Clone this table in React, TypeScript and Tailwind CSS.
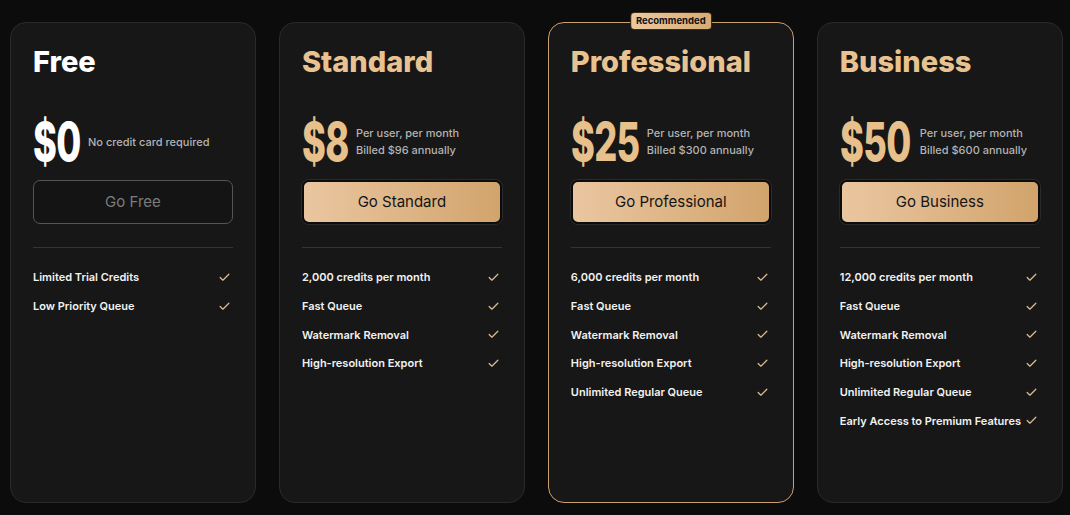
import { Check } from "lucide-react"

type Plan = {
  name: string
  price: string
  priceW: string
  note: string[]
  cta: string
  features: string[]
  free?: boolean
  recommended?: boolean
}

const plans: Plan[] = [
  {
    name: "Free",
    price: "$0",
    priceW: "w-[46px]",
    note: ["No credit card required"],
    cta: "Go Free",
    features: ["Limited Trial Credits", "Low Priority Queue"],
    free: true,
  },
  {
    name: "Standard",
    price: "$8",
    priceW: "w-[45px]",
    note: ["Per user, per month", "Billed $96 annually"],
    cta: "Go Standard",
    features: ["2,000 credits per month", "Fast Queue", "Watermark Removal", "High-resolution Export"],
  },
  {
    name: "Professional",
    price: "$25",
    priceW: "w-[67px]",
    note: ["Per user, per month", "Billed $300 annually"],
    cta: "Go Professional",
    features: [
      "6,000 credits per month",
      "Fast Queue",
      "Watermark Removal",
      "High-resolution Export",
      "Unlimited Regular Queue",
    ],
    recommended: true,
  },
  {
    name: "Business",
    price: "$50",
    priceW: "w-[71px]",
    note: ["Per user, per month", "Billed $600 annually"],
    cta: "Go Business",
    features: [
      "12,000 credits per month",
      "Fast Queue",
      "Watermark Removal",
      "High-resolution Export",
      "Unlimited Regular Queue",
      "Early Access to Premium Features",
    ],
  },
]

function PlanCard({ plan }: { plan: Plan }) {
  return (
    <div
      className={`relative flex-1 rounded-[16px] border bg-[#171717] px-[22px] pt-[22px] ${
        plan.recommended ? "border-[#c9a16f]" : "border-[#2a2a2a]"
      }`}
    >
      {plan.recommended && (
        <div className="absolute left-1/2 top-[-11px] -translate-x-1/2 rounded-[4px] border border-[#3a2a18] bg-gradient-to-r from-[#ecc9a0] to-[#d7ab74] px-[5px] py-[2px] text-[9.5px] leading-[12px] font-bold text-[#111]">
          Recommended
        </div>
      )}
      <h2
        className={`text-[29px] leading-[34px] font-extrabold ${
          plan.free ? "text-white" : "text-[#e8c391]"
        }`}
      >
        {plan.name}
      </h2>
      <div className="mt-[36px] flex h-[54px] items-center">
        <span className={`inline-block ${plan.priceW} shrink-0 overflow-visible`}>
          <span
            className={`inline-block origin-left scale-x-[0.67] text-[54px] leading-[54px] font-extrabold tracking-[-1px] ${
              plan.free ? "text-white" : "text-[#e8c08c]"
            }`}
          >
            {plan.price}
          </span>
        </span>
        <div className="ml-[9px] text-[11px] leading-[17px] font-medium whitespace-nowrap text-[#b4b4b4]">
          {plan.note.map((n) => (
            <div key={n}>{n}</div>
          ))}
        </div>
      </div>
      <button
        className={`mt-[11px] h-[44px] w-full rounded-[7px] text-[15px] ${
          plan.free
            ? "border border-[#555] bg-[#141414] text-[#7c7c7c]"
            : "border-2 border-[#0c0c0c] bg-gradient-to-r from-[#eac6a0] to-[#d2a46c] text-[#141414] shadow-[0_0_0_1px_#2a2a2a]"
        }`}
      >
        {plan.cta}
      </button>
      <div className="mt-[23px] h-px bg-[#343434]" />
      <ul className="flex flex-col gap-[11.7px] pt-[21px]">
        {plan.features.map((f) => (
          <li key={f} className="flex h-[17px] items-center justify-between gap-1">
            <span className="text-[11px] font-semibold whitespace-nowrap text-[#f2f2f2]">{f}</span>
            <Check className="mr-[2px] h-[13px] w-[13px] shrink-0 text-[#dcbb8e]" strokeWidth={2.3} />
          </li>
        ))}
      </ul>
    </div>
  )
}

export default function App() {
  return (
    <div
      className="flex h-[515px] w-[1070px] gap-[23px] bg-[#0c0c0c] pl-[10px] pr-[7px] pt-[22px] pb-[12px]"
      style={{ fontFamily: "Inter, 'Noto Sans', sans-serif" }}
    >
      {plans.map((p) => (
        <PlanCard key={p.name} plan={p} />
      ))}
    </div>
  )
}
